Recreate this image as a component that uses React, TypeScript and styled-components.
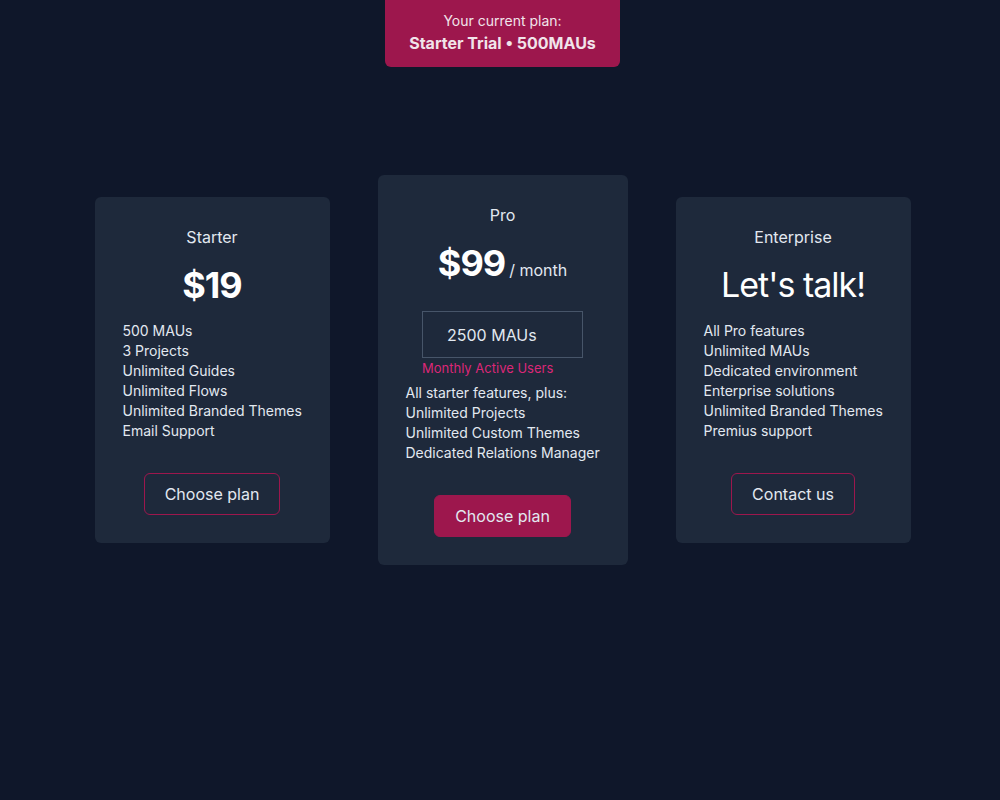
import styled, { createGlobalStyle } from 'styled-components';

const GlobalStyle = createGlobalStyle`
  html, body {
    margin: 0;
    padding: 0;
    background: #0f172a;
  }
  body {
    font-family: Inter, "Noto Sans", sans-serif;
    color: #e2e8f0;
  }
  * { box-sizing: border-box; }
`;

const Page = styled.div`
  min-height: 800px;
  display: flex;
  flex-direction: column;
  align-items: center;
  padding-left: 5px;
`;

const CurrentPlan = styled.div`
  background: #9d174d;
  border-radius: 0 0 6px 6px;
  padding: 11px 24px 12px;
  text-align: center;
  color: #f1e4ea;
`;

const CurrentLabel = styled.div`
  font-size: 14px;
  line-height: 20px;
`;

const CurrentName = styled.div`
  font-size: 16px;
  line-height: 24px;
  font-weight: 700;
`;

const Plans = styled.div`
  margin-top: 108px;
  display: flex;
  align-items: center;
  gap: 48px;
`;

const Card = styled.div<{ $wide?: boolean }>`
  width: ${({ $wide }) => ($wide ? 250 : 235)}px;
  background: #1e293b;
  border-radius: 6px;
  padding: 28px;
  display: flex;
  flex-direction: column;
  align-items: center;
`;

const PlanName = styled.div`
  font-size: 16px;
  line-height: 24px;
  color: #e2e8f0;
`;

const PriceRow = styled.div`
  margin-top: 16px;
  display: flex;
  align-items: baseline;
  gap: 4px;
  color: #ffffff;
`;

const Price = styled.span<{ $light?: boolean }>`
  font-size: ${({ $light }) => ($light ? 34 : 36)}px;
  line-height: 40px;
  font-weight: ${({ $light }) => ($light ? 400 : 700)};
  letter-spacing: -1px;
`;

const Period = styled.span`
  font-size: 16px;
  color: #e2e8f0;
`;

const MauBox = styled.div`
  margin-top: 28px;
  width: 161px;
  height: 47px;
  border: 1px solid #475569;
  display: flex;
  align-items: center;
  padding-left: 24px;
  font-size: 16px;
  color: #e2e8f0;
`;

const MauHint = styled.div`
  width: 161px;
  margin-top: 2px;
  font-size: 13px;
  line-height: 17px;
  color: #db2777;
  white-space: nowrap;
`;

const Features = styled.ul<{ $tight?: boolean }>`
  list-style: none;
  margin: ${({ $tight }) => ($tight ? 6 : 16)}px 0 0;
  padding: 0;
  align-self: stretch;
  font-size: 14px;
  line-height: 20px;
  color: #e2e8f0;
  white-space: nowrap;
`;

const Button = styled.button<{ $filled?: boolean }>`
  margin-top: 32px;
  font-family: inherit;
  font-size: 16px;
  line-height: 22px;
  padding: 9px 20px;
  border-radius: 6px;
  border: 1px solid #9d174d;
  background: ${({ $filled }) => ($filled ? '#9d174d' : 'transparent')};
  color: #e2e8f0;
  cursor: pointer;
`;

export default function App() {
  return (
    <>
      <GlobalStyle />
      <Page>
        <CurrentPlan>
          <CurrentLabel>Your current plan:</CurrentLabel>
          <CurrentName>Starter Trial • 500MAUs</CurrentName>
        </CurrentPlan>

        <Plans>
          <Card>
            <PlanName>Starter</PlanName>
            <PriceRow>
              <Price>$19</Price>
            </PriceRow>
            <Features>
              <li>500 MAUs</li>
              <li>3 Projects</li>
              <li>Unlimited Guides</li>
              <li>Unlimited Flows</li>
              <li>Unlimited Branded Themes</li>
              <li>Email Support</li>
            </Features>
            <Button>Choose plan</Button>
          </Card>

          <Card $wide>
            <PlanName>Pro</PlanName>
            <PriceRow>
              <Price>$99</Price>
              <Period>/ month</Period>
            </PriceRow>
            <MauBox>2500 MAUs</MauBox>
            <MauHint>Monthly Active Users</MauHint>
            <Features $tight>
              <li>All starter features, plus:</li>
              <li>Unlimited Projects</li>
              <li>Unlimited Custom Themes</li>
              <li>Dedicated Relations Manager</li>
            </Features>
            <Button $filled>Choose plan</Button>
          </Card>

          <Card>
            <PlanName>Enterprise</PlanName>
            <PriceRow>
              <Price $light>Let's talk!</Price>
            </PriceRow>
            <Features>
              <li>All Pro features</li>
              <li>Unlimited MAUs</li>
              <li>Dedicated environment</li>
              <li>Enterprise solutions</li>
              <li>Unlimited Branded Themes</li>
              <li>Premius support</li>
            </Features>
            <Button>Contact us</Button>
          </Card>
        </Plans>
      </Page>
    </>
  );
}
